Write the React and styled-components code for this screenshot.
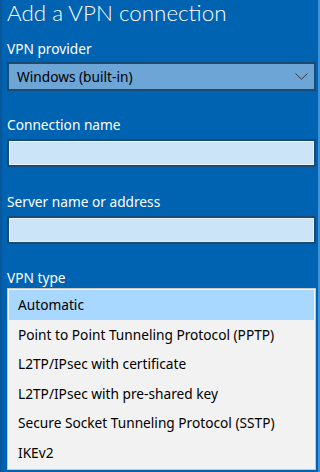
import React from 'react'
import styled, { createGlobalStyle } from 'styled-components'

const GlobalStyle = createGlobalStyle`
  html, body {
    margin: 0;
    padding: 0;
    background: #0063b1;
  }
  * {
    box-sizing: border-box;
  }
`

const Window = styled.div`
  width: 320px;
  height: 472px;
  overflow: hidden;
  background: #0063b1;
  border-left: 2px solid #0a5699;
  border-right: 2px solid #3f93dc;
  padding: 0 2px 0 5px;
  display: flex;
  flex-direction: column;
  font-family: 'Segoe UI', 'Noto Sans', sans-serif;
  color: #fff;

  & > * {
    flex: none;
  }
`

const Title = styled.h1`
  margin: 0;
  font-family: 'Segoe UI Light', Lato, 'Noto Sans', sans-serif;
  font-size: 22.4px;
  font-weight: 300;
  line-height: 26px;
  white-space: nowrap;
`

const Label = styled.div`
  font-size: 13.7px;
  line-height: 18px;
  margin-top: ${(p) => p.$gap}px;
  margin-bottom: ${(p) => p.$below}px;
`

const Combo = styled.div`
  height: 29px;
  background: #6ca5d6;
  border: 2px solid #1b4a73;
  display: flex;
  align-items: center;
  justify-content: space-between;
  padding: 0 6px 0 8px;
  color: #000;
  font-size: 13.7px;
`

const TextBox = styled.div`
  height: 28px;
  background: #cce4f7;
  border: 2px solid #1b4a73;
  box-shadow: inset 0 0 0 1px #e6f2fb;
`

const List = styled.div`
  background: #f2f2f2;
  border: 1px solid #c8c8c8;
  padding: 1px;
  height: 182px;
  display: flex;
  flex-direction: column;
`

const Item = styled.div`
  height: 29.5px;
  flex: none;
  display: flex;
  align-items: center;
  padding-left: 9px;
  font-size: 13.7px;
  color: #000;
  background: ${(p) => (p.$selected ? '#a8d8ff' : 'transparent')};
`

const Chevron = () => (
  <svg width="13" height="7" viewBox="0 0 13 7">
    <path d="M0.5 0.5 L6.5 6.2 L12.5 0.5" fill="none" stroke="#3a3a3a" strokeWidth="1" />
  </svg>
)

const types = [
  'Automatic',
  'Point to Point Tunneling Protocol (PPTP)',
  'L2TP/IPsec with certificate',
  'L2TP/IPsec with pre-shared key',
  'Secure Socket Tunneling Protocol (SSTP)',
  'IKEv2',
]

export default function App() {
  return (
    <>
      <GlobalStyle />
      <Window>
        <Title>Add a VPN connection</Title>
        <Label $gap={14} $below={4}>VPN provider</Label>
        <Combo>
          <span>Windows (built-in)</span>
          <Chevron />
        </Combo>
        <Label $gap={25} $below={5}>Connection name</Label>
        <TextBox />
        <Label $gap={26} $below={5}>Server name or address</Label>
        <TextBox />
        <Label $gap={25} $below={1}>VPN type</Label>
        <List>
          {types.map((t, i) => (
            <Item key={t} $selected={i === 0}>
              {t}
            </Item>
          ))}
        </List>
      </Window>
    </>
  )
}
